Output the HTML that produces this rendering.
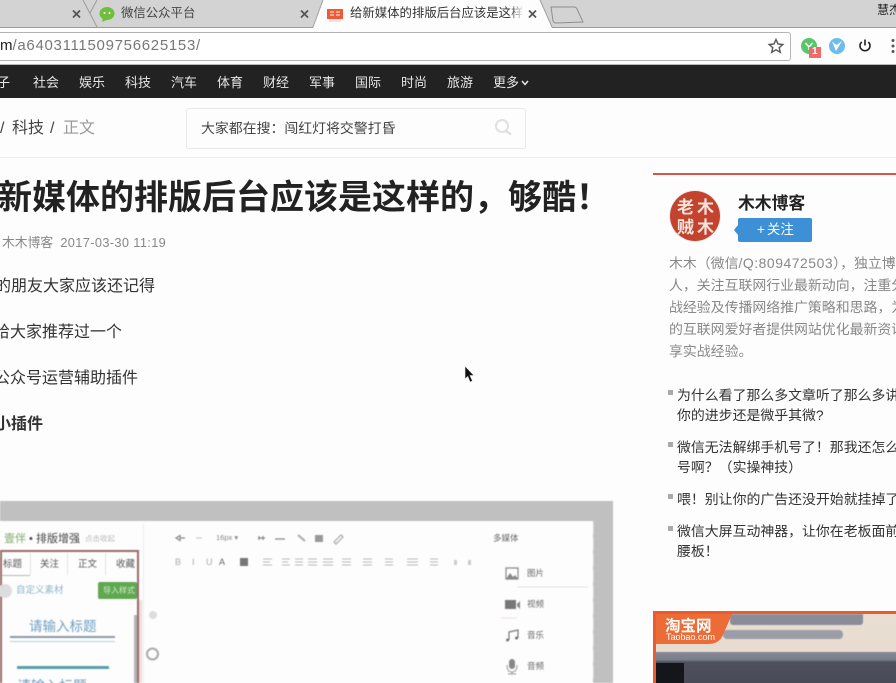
<!DOCTYPE html>
<html lang="zh"><head><meta charset="utf-8"><style>
html,body{margin:0;padding:0;background:#fdfdfd}
#p{position:relative;width:896px;height:683px;overflow:hidden;background:#fdfdfd;font-family:"Liberation Sans","Noto Sans CJK SC",sans-serif;color:#333}
.a{position:absolute;white-space:nowrap}
.r{position:absolute}
svg{position:absolute;overflow:visible}
.nav{top:74px;font-size:13px;line-height:18px;color:#e6e6e6}
.b{font-size:16px;line-height:22px;color:#333}
.s{font-size:13.9px;line-height:20px;color:#888;left:669px}
.l{font-size:13.9px;line-height:20px;color:#333;left:677px}
.q{position:absolute;left:668px;width:5px;height:5px;background:#aaa}
.e{font-size:7.5px;line-height:10px;color:#888}
.seal{font-size:17px;line-height:20px;font-weight:bold;color:#f3e4dc}
#em{position:absolute;left:0;top:0;width:896px;height:683px;filter:blur(.45px)}
</style></head><body><div id="p">

<!-- tab strip -->
<div class="r" style="left:0;top:0;width:896px;height:27px;background:#d3d3d3"></div>
<div class="r" style="left:0;top:27px;width:896px;height:1px;background:#9b9b9b"></div>
<svg style="left:0;top:0" width="896" height="30">
<path d="M313 28 L323 0 L540 0 L552 28Z" fill="#fdfdfd"/>
<path d="M83 0 L97 27 M97 0 L90 13" stroke="#9c9c9c" fill="none"/>
<path d="M313 27 L323 0 M540 0 L552 27" stroke="#a0a0a0" fill="none"/>
<path d="M551 7 L574 7 Q576 7 577 9 L583 22 L556 23 Q554 23 553 21Z" fill="#d3d3d3" stroke="#8f8f8f"/>
<path d="M73 10.500 L80 17.500 M80 10.500 L73 17.500 M301 10.500 L308 17.500 M308 10.500 L301 17.500 M529 10.500 L536 17.500 M536 10.500 L529 17.500" stroke="#555" stroke-width="1.800" fill="none"/>
<ellipse cx="107" cy="13.500" rx="7.500" ry="6.500" fill="#6fbf3c"/>
<path d="M103 18 L102 22 L108 19.500Z" fill="#6fbf3c"/>
<circle cx="104.500" cy="13" r="1" fill="#fff"/><circle cx="109.500" cy="13" r="1" fill="#fff"/>
<rect x="327" y="9" width="16" height="10" fill="#ee5a38"/>
<path d="M330 12 H334 M330 15 H334 M336 12 H340 M336 15 H340" stroke="#f8d5cb" stroke-width="1.200"/>
<rect x="329" y="19" width="12" height="3" fill="#e6e6e6"/>
</svg>
<div class="a" style="left:121px;top:5px;font-size:12.400px;line-height:17px;color:#444">微信公众平台</div>
<div class="a" style="left:350px;top:5px;font-size:12.400px;line-height:17px;color:#333;width:175px;overflow:hidden">给新媒体的排版后台应该是这样的</div>
<div class="r" style="left:510px;top:3px;width:16px;height:20px;background:linear-gradient(90deg,rgba(253,253,253,0),#fdfdfd 85%)"></div>
<div class="a" style="left:877px;top:2px;font-size:12px;line-height:17px;color:#222">慧杰</div>

<!-- address bar -->
<div class="r" style="left:0;top:28px;width:896px;height:36px;background:#fdfdfd"></div>
<div class="r" style="left:-10px;top:32px;width:799px;height:27px;border:1px solid #b4b4b4;border-radius:3px;background:#fff"></div>
<div class="a" style="left:0;top:37px;font-size:15px;line-height:18px;letter-spacing:.7px;color:#777"><span style="color:#222;letter-spacing:0">m</span>/a6403111509756625153/</div>
<svg style="left:0;top:0" width="896" height="66">
<path d="M776 39.500 L778 44 L782.800 44.500 L779.200 47.600 L780.300 52.300 L776 49.800 L771.700 52.300 L772.800 47.600 L769.200 44.500 L774 44Z" fill="none" stroke="#555" stroke-width="1.400"/>
<circle cx="809" cy="46" r="8" fill="#5cc46a"/>
<path d="M805.500 43 L809 47 L812.500 43 M809 47 V50" stroke="#fff" stroke-width="1.400" fill="none"/>
<rect x="809" y="47" width="12" height="11" fill="#ee6b6b"/>
<circle cx="837" cy="46" r="8" fill="#6cbcec"/>
<path d="M832 41.500 L836 51 L842 41 L836.500 45Z" fill="#fff"/>
<path d="M861.700 42 A5 5 0 1 0 868.300 42 M865 39.500 V45.500" stroke="#222" stroke-width="1.600" fill="none"/>
<circle cx="893" cy="40.500" r="1.500" fill="#555"/><circle cx="893" cy="46" r="1.500" fill="#555"/><circle cx="893" cy="51.500" r="1.500" fill="#555"/>
</svg>
<div class="a" style="left:812px;top:46px;font-size:10px;line-height:12px;font-weight:bold;color:#fff">1</div>
<div class="r" style="left:0;top:64px;width:896px;height:1px;background:#b8b8b8"></div>

<!-- black nav -->
<div class="r" style="left:0;top:65px;width:896px;height:33px;background:#222"></div>
<div class="a nav" style="left:-3px">子</div>
<div class="a nav" style="left:33px">社会</div>
<div class="a nav" style="left:79px">娱乐</div>
<div class="a nav" style="left:125px">科技</div>
<div class="a nav" style="left:171px">汽车</div>
<div class="a nav" style="left:217px">体育</div>
<div class="a nav" style="left:263px">财经</div>
<div class="a nav" style="left:309px">军事</div>
<div class="a nav" style="left:355px">国际</div>
<div class="a nav" style="left:401px">时尚</div>
<div class="a nav" style="left:447px">旅游</div>
<div class="a nav" style="left:493px">更多</div>
<svg style="left:0;top:0" width="540" height="98"><path d="M522 81 L525 84.500 L528 81" stroke="#e6e6e6" stroke-width="1.500" fill="none"/></svg>

<!-- breadcrumb + search -->
<div class="a" style="left:0;top:118px;font-size:16px;line-height:22px;color:#444">/</div>
<div class="a" style="left:12px;top:118px;font-size:16px;line-height:22px;color:#444">科技</div>
<div class="a" style="left:50px;top:118px;font-size:16px;line-height:22px;color:#444">/</div>
<div class="a" style="left:63px;top:118px;font-size:16px;line-height:22px;color:#999">正文</div>
<div class="r" style="left:186px;top:108px;width:338px;height:39px;border:1px solid #e8e8e8;border-radius:3px;background:#fdfdfd"></div>
<div class="a" style="left:201px;top:119px;font-size:13.900px;line-height:19px;color:#444">大家都在搜：闯红灯将交警打昏</div>
<svg style="left:0;top:0" width="540" height="150"><circle cx="502" cy="126" r="6" stroke="#e0e0e0" stroke-width="2" fill="none"/><path d="M506 131 L511 134.500" stroke="#e0e0e0" stroke-width="2.500"/></svg>
<div class="r" style="left:0;top:157px;width:896px;height:1px;background:#ececec"></div>

<!-- article -->
<div class="a" style="left:-2px;top:175px;font-size:34px;line-height:46px;font-weight:bold;color:#222">新媒体的排版后台应该是这样的，够酷！</div>
<div class="a" style="left:2px;top:234px;font-size:12.800px;line-height:18px;color:#888">木木博客&nbsp;&nbsp;<span style="letter-spacing:.36px">2017-03-30 11:19</span></div>
<div class="a b" style="left:-5px;top:276px">的朋友大家应该还记得</div>
<div class="a b" style="left:-6px;top:322px">给大家推荐过一个</div>
<div class="a b" style="left:-6px;top:368px">公众号运营辅助插件</div>
<div class="a b" style="left:-5px;top:414px;font-weight:bold">小插件</div>

<!-- cursor -->
<svg style="left:0;top:0" width="500" height="400"><path d="M465 366 V379 L467.800 376.500 L470 382 L472.500 381 L470 375.500 L474 375.500Z" fill="#111" stroke="#eee" stroke-width=".6"/></svg>

<!-- embedded image -->
<div id="em">
<div class="r" style="left:0;top:501px;width:613px;height:182px;background:#c0c0c0"></div>
<div class="r" style="left:0;top:521px;width:593px;height:162px;background:#fdfdfd"></div>
<div class="r" style="left:143px;top:524px;width:1px;height:159px;background:#ececec"></div>
<div class="a" style="left:4px;top:532px;font-size:11px;line-height:14px;color:#444"><span style="color:#7fa866">壹伴</span> • 排版增强</div>
<div class="a e" style="left:85px;top:534px;color:#bbb">点击收起</div>
<div class="r" style="left:0;top:550px;width:139px;height:133px;border-top:2px solid #9c6a6a;border-right:2px solid #9c6a6a;border-left:2px solid #9c6a6a;box-sizing:border-box"></div>
<div class="r" style="left:2px;top:575px;width:28px;height:1px;background:#a9c2a0"></div>
<div class="r" style="left:30px;top:553px;width:1px;height:22px;background:#e4e4e4"></div>
<div class="r" style="left:67px;top:553px;width:1px;height:22px;background:#e4e4e4"></div>
<div class="r" style="left:105px;top:553px;width:1px;height:22px;background:#e4e4e4"></div>
<div class="a" style="left:3px;top:558px;font-size:9.500px;line-height:14px;color:#555">标题</div>
<div class="a" style="left:40px;top:558px;font-size:9.500px;line-height:14px;color:#555">关注</div>
<div class="a" style="left:78px;top:558px;font-size:9.500px;line-height:14px;color:#555">正文</div>
<div class="a" style="left:116px;top:558px;font-size:9.500px;line-height:14px;color:#555">收藏</div>
<div class="r" style="left:-2px;top:584px;width:14px;height:14px;border-radius:50%;background:#ddd"></div>
<div class="a" style="left:16px;top:584px;font-size:9.500px;line-height:14px;color:#8db3c8">自定义素材</div>
<div class="r" style="left:98px;top:582px;width:39px;height:17px;border-radius:2px;background:#5fa84f"></div>
<div class="a" style="left:103px;top:585px;font-size:8px;line-height:11px;color:#dcecd6">导入样式</div>
<div class="a" style="left:29px;top:617px;font-size:13.500px;line-height:20px;color:#6e9fc4">请输入标题</div>
<div class="r" style="left:10px;top:636px;width:105px;height:2px;background:#8a9aa8"></div>
<div class="r" style="left:10px;top:641px;width:105px;height:1px;background:#b5d3dc"></div>
<div class="r" style="left:17px;top:666px;width:92px;height:3px;background:#5a9fa6"></div>
<div class="a" style="left:17px;top:677px;font-size:14px;line-height:18px;color:#6e9fc4">请输入标题</div>
<div class="r" style="left:134px;top:615px;width:3px;height:68px;background:#b5b5b5"></div>
<div class="r" style="left:139px;top:600px;width:3px;height:83px;background:#f0dcdc"></div>
<svg style="left:0;top:0" width="620" height="683">
<circle cx="153" cy="615" r="4" fill="#ddd"/>
<circle cx="152.500" cy="654" r="5.500" fill="none" stroke="#aaa" stroke-width="2"/>
<g stroke="#888" fill="none" stroke-width="1.200">
<path d="M176 538 L180 535.500 V540.500 Z M180 538 H185"/>
<path d="M196 538 H202" stroke="#ccc"/>
<path d="M258 538 H265 M259 536 V540 M263 536 V540 M275 539 H285"/>
<path d="M298 535 L305 541" stroke-width="2" stroke="#aaa"/>
<path d="M334 542 L341 535 L343 537 L336 544Z" stroke="#aaa"/>
<path d="M263 559 H272 M263 562 H270 M263 565 H272 M282 559 H290 M282 562 H288 M282 565 H290 M295 559 H303 M295 562 H303 M295 565 H303 M308 559 H317 M308 562 H317 M308 565 H317 M323 559 H333 M323 562 H333 M323 565 H333 M342 559 H351 M342 562 H351 M342 565 H351 M363 559 H372 M363 562 H372 M363 565 H372 M385 559 H393 M385 562 H393 M385 565 H393 M407 559 H418 M407 562 H418 M407 565 H418 M430 559 H438 M430 562 H438 M430 565 H438" stroke="#bbb" stroke-width="1"/>
</g>
<rect x="315" y="535" width="8" height="7" fill="#999"/>
<rect x="240" y="558" width="8" height="8" fill="#777"/>
<rect x="454" y="560" width="3" height="5" fill="#ccc"/><rect x="468" y="560" width="3" height="5" fill="#ccc"/>
<path d="M506 568 H518 V579 H506Z" fill="none" stroke="#888" stroke-width="1.200"/>
<path d="M506 579 L510 573 L513 577 L515 575 L518 579Z" fill="#888"/>
<rect x="505" y="600" width="11" height="9" fill="#777"/>
<path d="M517 604 L520 601 V609 L517 606Z" fill="#888"/>
<path d="M509 640 V632 L518 630 V638" fill="none" stroke="#777" stroke-width="1.200"/>
<circle cx="507.500" cy="640" r="1.500" fill="#777"/><circle cx="516.500" cy="638" r="1.500" fill="#777"/>
<rect x="509" y="659" width="6" height="10" rx="3" fill="#888"/>
<path d="M507 665 Q507 672 512 672 Q517 672 517 665 M512 672 V674 M508 674 H516" fill="none" stroke="#999"/>
<path d="M517 587 H588" stroke="#e2e2e2"/>
<path d="M501 618 H517" stroke="#f0dede"/>
<path d="M593.500 522 V683" stroke="#d4d4d4" stroke-dasharray="12 4"/>
</svg>
<div class="a e" style="left:216px;top:533px">16px ▾</div>
<div class="a" style="left:175px;top:556px;font-size:9px;line-height:12px;color:#aaa">B</div>
<div class="a" style="left:192px;top:556px;font-size:9px;line-height:12px;color:#aaa">I</div>
<div class="a" style="left:206px;top:556px;font-size:9px;line-height:12px;color:#aaa">U</div>
<div class="a" style="left:219px;top:556px;font-size:9px;line-height:12px;color:#666">A</div>
<div class="a" style="left:493px;top:532px;font-size:8.500px;line-height:12px;color:#666">多媒体</div>
<div class="a" style="left:527px;top:567px;font-size:8.500px;line-height:12px;color:#666">图片</div>
<div class="a" style="left:527px;top:598px;font-size:8.500px;line-height:12px;color:#666">视频</div>
<div class="a" style="left:527px;top:629px;font-size:8.500px;line-height:12px;color:#666">音乐</div>
<div class="a" style="left:527px;top:660px;font-size:8.500px;line-height:12px;color:#666">音频</div>
</div>

<!-- sidebar -->
<div class="r" style="left:653px;top:173px;width:243px;height:2px;background:#d9544a"></div>
<div class="r" style="left:670px;top:191px;width:50px;height:50px;border-radius:50%;background:#c4432f;box-shadow:0 0 0 1px #eee"></div>
<div class="a seal" style="left:677px;top:198px">老</div>
<div class="a seal" style="left:697px;top:198px">木</div>
<div class="a seal" style="left:677px;top:218px">贼</div>
<div class="a seal" style="left:697px;top:218px">木</div>
<div class="a" style="left:738px;top:193px;font-size:16.800px;line-height:22px;font-weight:bold;color:#222">木木博客</div>
<div class="r" style="left:738px;top:218px;width:74px;height:24px;border-radius:2px;background:#3d8fd6"></div>
<svg style="left:0;top:0" width="896" height="260"><path d="M738 225 L734 230 L738 235Z" fill="#3d8fd6"/></svg>
<div class="a" style="left:757px;top:221px;font-size:13.500px;line-height:18px;color:#fff"><span style="margin-right:2px">+</span>关注</div>
<div class="a s" style="top:253px">木木（微信<span style="letter-spacing:.55px">/Q:809472503</span>），独立博客</div>
<div class="a s" style="top:275px">人，关注互联网行业最新动向，注重分</div>
<div class="a s" style="top:297px">战经验及传播网络推广策略和思路，为</div>
<div class="a s" style="top:319px">的互联网爱好者提供网站优化最新资讯</div>
<div class="a s" style="top:341px">享实战经验。</div>
<div class="q" style="top:390px"></div>
<div class="a l" style="top:385px">为什么看了那么多文章听了那么多讲</div>
<div class="a l" style="top:405px">你的进步还是微乎其微?</div>
<div class="q" style="top:442px"></div>
<div class="a l" style="top:437px">微信无法解绑手机号了！那我还怎么</div>
<div class="a l" style="top:457px">号啊？（实操神技）</div>
<div class="q" style="top:494px"></div>
<div class="a l" style="top:489px">喂！别让你的广告还没开始就挂掉了</div>
<div class="q" style="top:526px"></div>
<div class="a l" style="top:521px">微信大屏互动神器，让你在老板面前</div>
<div class="a l" style="top:541px">腰板！</div>

<!-- ad -->
<div class="r" style="left:653px;top:611px;width:243px;height:72px;background:#ee5a2c"></div>
<div class="r" style="left:656px;top:614px;width:240px;height:69px;background:linear-gradient(180deg,#e9ded2 0,#e8dcd0 54%,#858894 56%,#7a7f8c 66%,#4e4f5c 70%,#4a4b58 100%)"></div>
<div class="r" style="left:730px;top:614px;width:133px;height:11px;border-radius:0 0 3px 3px;background:#8a8c98;filter:blur(.6px)"></div>
<div class="r" style="left:723px;top:630px;width:120px;height:9px;border-radius:4px;background:#9a9ca8;filter:blur(.6px)"></div>
<div class="r" style="left:656px;top:663px;width:28px;height:20px;background:#15151c"></div>
<svg style="left:0;top:0" width="896" height="683"><path d="M656 614 H732 L723 635 Q719 644 708 644 H656Z" fill="#ec6c37"/></svg>
<div class="a" style="left:665px;top:618px;font-size:15.500px;line-height:17px;font-weight:bold;color:#fff">淘宝网</div>
<div class="a" style="left:666px;top:631px;font-size:9px;line-height:12px;color:#fff">Taobao.com</div>

</div></body></html>
